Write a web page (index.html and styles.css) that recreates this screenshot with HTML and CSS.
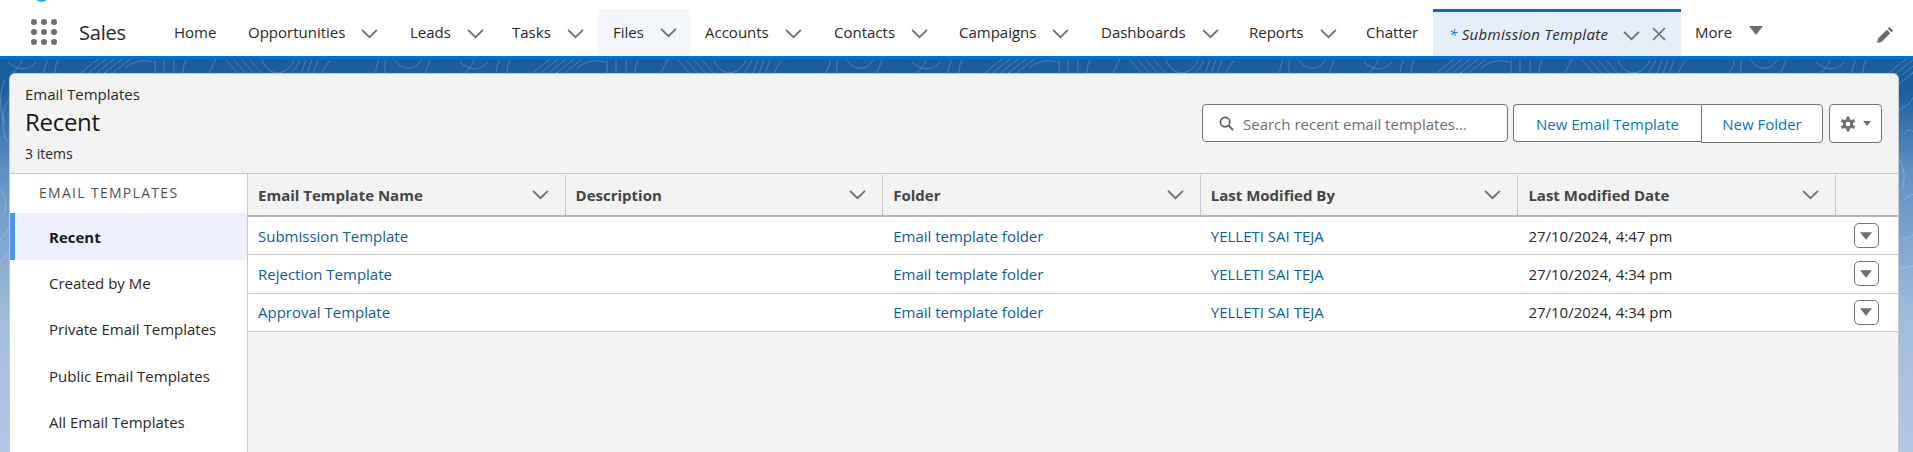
FILE: index.html
```html
<!DOCTYPE html>
<html lang="en">
<head>
    <meta charset="UTF-8">
    <title>Email Templates</title>
    <link rel="stylesheet" href="styles.css">
</head>
<body>
    <svg class="icon-defs" width="0" height="0">
        <defs>
            <symbol id="chev" viewBox="0 0 16 10"><polyline points="1,1.5 8,8.5 15,1.5" fill="none" stroke="currentColor" stroke-width="1.7"/></symbol>
            <symbol id="tri" viewBox="0 0 14 9"><polygon points="0,0 14,0 7,9" fill="currentColor"/></symbol>
            <pattern id="topo" width="452" height="452" patternUnits="userSpaceOnUse">
                <g fill="none" stroke="#fff" stroke-opacity="0.22" stroke-width="1">
                    <path d="M8 62c8 8 20 10 28 0M22 60c-2 6-6 10-10 14M48 60c-4 6-4 12-4 16M58 60c-3 6-3 10-3 16"/>
                    <path d="M78 75l20-16M86 75l20-16M94 75l20-16M102 75l20-16M110 75l20-16"/>
                    <path d="M125 68c10-8 20-8 28-6M155 60v16M164 60v16M174 60v16M186 60c-3 6-3 10-3 16M208 75l8-16"/>
                    <path d="M226 60l14 16M234 60l14 16M242 60l14 16M250 60l14 16M262 60c6 16 24 18 32 0M300 60c-3 6-6 10-10 16M306 60l-6 16M312 60l-6 16M318 60l-6 16M330 60c-4 6-8 10-8 16"/>
                    <path d="M370 76c6-6 8-10 8-16M385 76v-16M395 60c6 10 20 12 26 0M430 60c-2 6-4 10-6 16"/>
                    <path d="M5 80c-6 12-6 30 0 44M9 100c-8 8-8 30-2 42M0 190c6 6 8 18 2 28M0 240c6-6 8-10 9-14M0 262c4-2 7-8 9-10"/>
                    <path d="M88 86l18-14M90 110c8-4 12-6 16-14M96 134c4-6 6-4 10-2M92 160c4 10 6 16 2 30M96 200c4-4 8-6 12-6M90 238c6 2 12 0 16-4M92 268c6 0 10-2 14-2"/>
                </g>
            </pattern>
        </defs>
    </svg>
    <svg class="topo-layer" width="100%" height="100%"><rect width="100%" height="100%" fill="url(#topo)"/></svg>

    <header class="topnav">
        <span class="logo-tip"></span>
        <div class="waffle">
            <i></i><i></i><i></i><i></i><i></i><i></i><i></i><i></i><i></i>
        </div>
        <span class="app-name">Sales</span>
        <nav class="tabs">
            <a class="tab tab-home">Home</a>
            <a class="tab tab-opps">Opportunities<svg class="chev"><use href="#chev"/></svg></a>
            <a class="tab tab-leads">Leads<svg class="chev"><use href="#chev"/></svg></a>
            <a class="tab tab-tasks">Tasks<svg class="chev"><use href="#chev"/></svg></a>
            <a class="tab tab-files">Files<svg class="chev"><use href="#chev"/></svg></a>
            <a class="tab tab-accounts">Accounts<svg class="chev"><use href="#chev"/></svg></a>
            <a class="tab tab-contacts">Contacts<svg class="chev"><use href="#chev"/></svg></a>
            <a class="tab tab-campaigns">Campaigns<svg class="chev"><use href="#chev"/></svg></a>
            <a class="tab tab-dash">Dashboards<svg class="chev"><use href="#chev"/></svg></a>
            <a class="tab tab-reports">Reports<svg class="chev"><use href="#chev"/></svg></a>
            <a class="tab tab-chatter">Chatter</a>
            <a class="tab tab-current"><em><span class="star">*</span> Submission Template</em><svg class="chev"><use href="#chev"/></svg><svg class="close" viewBox="0 0 14 14"><path d="M1 1l12 12M13 1L1 13" stroke="currentColor" stroke-width="1.7" fill="none"/></svg></a>
            <a class="tab tab-more">More<svg class="more-tri"><use href="#tri"/></svg></a>
        </nav>
        <svg class="pencil" viewBox="0 0 16 16"><path d="M12.500 0L16 3.500 14.300 5.200 10.800 1.700zM9.800 2.700l3.500 3.500L4.500 15 0 16l1-4.500z" fill="currentColor"/></svg>
    </header>

    <main class="panel">
        <section class="panel-head">
            <div class="titles">
                <div class="crumb">Email Templates</div>
                <h1>Recent</h1>
                <div class="count">3 items</div>
            </div>
            <div class="actions">
                <label class="search">
                    <svg viewBox="0 0 16 16"><circle cx="6.500" cy="6.500" r="5" fill="none" stroke="currentColor" stroke-width="1.800"/><path d="M10.300 10.300l4.700 4.700" stroke="currentColor" stroke-width="2"/></svg>
                    <span>Search recent email templates...</span>
                </label>
                <div class="btn-group">
                    <button class="btn btn-new">New Email Template</button>
                    <button class="btn btn-folder">New Folder</button>
                </div>
                <button class="btn btn-gear">
                    <svg class="gear" viewBox="0 0 16 16"><circle cx="8" cy="8" r="3.800" fill="none" stroke="currentColor" stroke-width="3"/><path d="M8 .5v3M8 12.500v3M1.500 4.200l2.600 1.500M11.900 10.300l2.600 1.500M1.500 11.800l2.600-1.500M11.900 5.700l2.600-1.500" stroke="currentColor" stroke-width="3"/></svg>
                    <svg class="gear-tri"><use href="#tri"/></svg>
                </button>
            </div>
        </section>
        <section class="panel-body">
            <aside class="sidebar">
                <div class="side-title">EMAIL TEMPLATES</div>
                <a class="side-item side-active">Recent</a>
                <a class="side-item">Created by Me</a>
                <a class="side-item">Private Email Templates</a>
                <a class="side-item">Public Email Templates</a>
                <a class="side-item">All Email Templates</a>
            </aside>
            <div class="list">
                <table>
                    <colgroup>
                        <col class="col-main"><col class="col-main"><col class="col-main"><col class="col-main"><col class="col-main"><col>
                    </colgroup>
                    <thead>
                        <tr>
                            <th><div>Email Template Name <svg class="chev"><use href="#chev"/></svg></div></th>
                            <th><div>Description <svg class="chev"><use href="#chev"/></svg></div></th>
                            <th><div>Folder <svg class="chev"><use href="#chev"/></svg></div></th>
                            <th><div>Last Modified By <svg class="chev"><use href="#chev"/></svg></div></th>
                            <th><div>Last Modified Date <svg class="chev"><use href="#chev"/></svg></div></th>
                            <th></th>
                        </tr>
                    </thead>
                    <tbody>
                        <tr>
                            <td><a>Submission Template</a></td>
                            <td></td>
                            <td><a>Email template folder</a></td>
                            <td><a>YELLETI SAI TEJA</a></td>
                            <td>27/10/2024, 4:47 pm</td>
                            <td><span class="row-btn"><svg><use href="#tri"/></svg></span></td>
                        </tr>
                        <tr>
                            <td><a>Rejection Template</a></td>
                            <td></td>
                            <td><a>Email template folder</a></td>
                            <td><a>YELLETI SAI TEJA</a></td>
                            <td>27/10/2024, 4:34 pm</td>
                            <td><span class="row-btn"><svg><use href="#tri"/></svg></span></td>
                        </tr>
                        <tr>
                            <td><a>Approval Template</a></td>
                            <td></td>
                            <td><a>Email template folder</a></td>
                            <td><a>YELLETI SAI TEJA</a></td>
                            <td>27/10/2024, 4:34 pm</td>
                            <td><span class="row-btn"><svg><use href="#tri"/></svg></span></td>
                        </tr>
                    </tbody>
                </table>
            </div>
        </section>
    </main>
</body>
</html>
```

FILE: styles.css
```css
* {
    box-sizing: border-box;
}
html, body {
    height: 100%;
}
body {
    margin: 0;
    height: 100vh;
    overflow: hidden;
    display: flex;
    flex-direction: column;
    font-family: "Open Sans", "Noto Sans", sans-serif;
    font-size: 15px;
    color: #2b2826;
    background: linear-gradient(#1b5c9c 59px, #1b5f9f 90px, #5f90c4 170px, #a3bcdc 320px, #b3c7e2 452px);
    position: relative;
}
.icon-defs {
    position: absolute;
}
.topo-layer {
    position: absolute;
    top: 0;
    left: 0;
}

/* top navigation */
.topnav {
    position: relative;
    height: 59px;
    flex: none;
    display: flex;
    background: white;
    border-bottom: 3px solid #0170d2;
}
.logo-tip {
    position: absolute;
    top: -10px;
    left: 35px;
    width: 13px;
    height: 12px;
    border-radius: 50%;
    background: #1ab0ee;
}
.waffle {
    width: 26px;
    height: 26px;
    margin: 19px 0 0 31px;
    display: grid;
    grid-template-columns: repeat(3, 6px);
    grid-template-rows: repeat(3, 6px);
    gap: 4px;
}
.waffle i {
    background: #706e6b;
    border-radius: 50%;
}
.app-name {
    margin: 16px 0 0 22px;
    width: 95px;
    font-size: 20px;
    line-height: 34px;
    letter-spacing: -0.2px;
}
.tabs {
    display: flex;
    flex: none;
}
.tab {
    height: 53px;
    padding-top: 11px;
    display: flex;
    align-items: center;
    white-space: pre;
    color: #2b2826;
}
.chev {
    width: 17px;
    height: 11px;
    color: #706e6b;
    flex: none;
}
.tab .chev {
    margin-left: 16px;
    margin-top: 2px;
}
.tab-home { width: 74px; }
.tab-opps { width: 162px; }
.tab-leads { width: 102px; }
.tab-tasks { width: 86px; }
.tab-files {
    width: 92px;
    padding: 0 0 2px 15px;
    margin-top: 9px;
    height: 47px;
    background: #f3f7fc;
}
.tab-accounts { width: 144px; padding-left: 15px; }
.tab-contacts { width: 125px; }
.tab-campaigns { width: 142px; }
.tab-dash { width: 148px; }
.tab-reports { width: 117px; }
.tab-chatter { width: 67px; }
.tab-current {
    width: 248px;
    margin-top: 9px;
    height: 47px;
    padding: 0 0 0 16px;
    background: #e5eef9;
    border-top: 3px solid #0170d2;
}
.tab-current em {
    font-style: italic;
    letter-spacing: 0.3px;
}
.star {
    color: #0176d3;
}
.tab-current .chev {
    margin-left: 15px;
}
.close {
    width: 14px;
    height: 14px;
    margin-left: 12px;
    color: #706e6b;
}
.tab-more {
    padding-left: 14px;
}
.more-tri {
    width: 14px;
    height: 9px;
    margin-left: 17px;
    margin-top: -3px;
    color: #706e6b;
}
.pencil {
    position: absolute;
    right: 20px;
    top: 27px;
    width: 16px;
    height: 16px;
    color: #706e6b;
}

/* main panel */
.panel {
    position: relative;
    flex: 1;
    min-height: 0;
    margin: 15px 15px 0 10px;
    background: #f3f3f3;
    border-radius: 5px 5px 0 0;
    box-shadow: 0 0 0 1px #c9c9c9;
    display: flex;
    flex-direction: column;
}
.panel-head {
    height: 100px;
    flex: none;
    display: flex;
    justify-content: space-between;
    padding: 10px 16px 0 15px;
    border-bottom: 1px solid #c9c9c9;
}
.crumb {
    line-height: 20px;
}
h1 {
    margin: 0;
    font-size: 24px;
    font-weight: 400;
    line-height: 36px;
    color: #181818;
    letter-spacing: -0.3px;
}
.count {
    margin-top: 5px;
    font-size: 14px;
    line-height: 18px;
}
.actions {
    display: flex;
    margin-top: 20px;
    height: 39px;
}
.search {
    width: 306px;
    height: 38px;
    display: flex;
    align-items: center;
    gap: 9px;
    padding: 1px 0 0 16px;
    background: white;
    border: 1px solid #747474;
    border-radius: 4px;
    color: #706e6b;
}
.search svg {
    width: 15px;
    height: 15px;
    color: #5c5c5c;
}
.btn-group {
    display: flex;
    margin-left: 5px;
}
.btn {
    height: 39px;
    padding: 0;
    background: white;
    border: 1px solid #747474;
    font: inherit;
    color: #0176d3;
}
.btn-new {
    width: 188px;
    height: 38px;
    padding-top: 1px;
    border-radius: 4px 0 0 4px;
    border-right: 0;
}
.btn-folder {
    width: 122px;
    border-radius: 0 4px 4px 0;
}
.btn-gear {
    width: 53px;
    margin-left: 6px;
    border-radius: 4px;
    display: flex;
    align-items: center;
    justify-content: center;
    gap: 7px;
    color: #706e6b;
}
.gear {
    width: 16px;
    height: 16px;
}
.gear-tri {
    width: 8px;
    height: 5px;
}

/* sidebar and list */
.panel-body {
    flex: 1;
    min-height: 0;
    display: flex;
}
.sidebar {
    width: 238px;
    flex: none;
    background: white;
    border-right: 1px solid #c9c9c9;
}
.side-title {
    height: 39px;
    padding: 9px 0 0 29px;
    font-size: 14px;
    line-height: 20px;
    letter-spacing: 1.300px;
    color: #514f4d;
}
.side-item {
    display: flex;
    align-items: center;
    height: 46.500px;
    padding-left: 39px;
    color: #2b2826;
}
.side-active {
    font-weight: 700;
    color: #181818;
    background: #eef1fd;
    border-left: 5px solid #4a94f6;
    padding: 1px 0 0 34px;
}
.list {
    flex: 1;
    min-width: 0;
}
table {
    width: 100%;
    table-layout: fixed;
    border-collapse: collapse;
}
.col-main {
    width: 317.600px;
}
th {
    height: 42px;
    padding: 0;
    text-align: left;
    font-weight: 700;
    background: #f3f3f3;
    color: #444;
    border-bottom: 2px solid #b5b5b5;
}
th div {
    height: 40px;
    display: flex;
    align-items: center;
    justify-content: space-between;
    padding: 0 16px 0 10px;
    border-right: 1px solid #c9c9c9;
}
td {
    height: 38.500px;
    padding: 0 0 0 10px;
    background: white;
    border-bottom: 1px solid #c9c9c9;
    white-space: nowrap;
}
td a {
    color: #0b5cab;
}
td:last-child {
    padding: 0 0 0 18px;
}
.row-btn {
    display: flex;
    align-items: center;
    justify-content: center;
    width: 25px;
    height: 25px;
    border: 1px solid #747474;
    border-radius: 5px;
    background: white;
    color: #706e6b;
}
.row-btn svg {
    width: 12px;
    height: 8px;
}
```
